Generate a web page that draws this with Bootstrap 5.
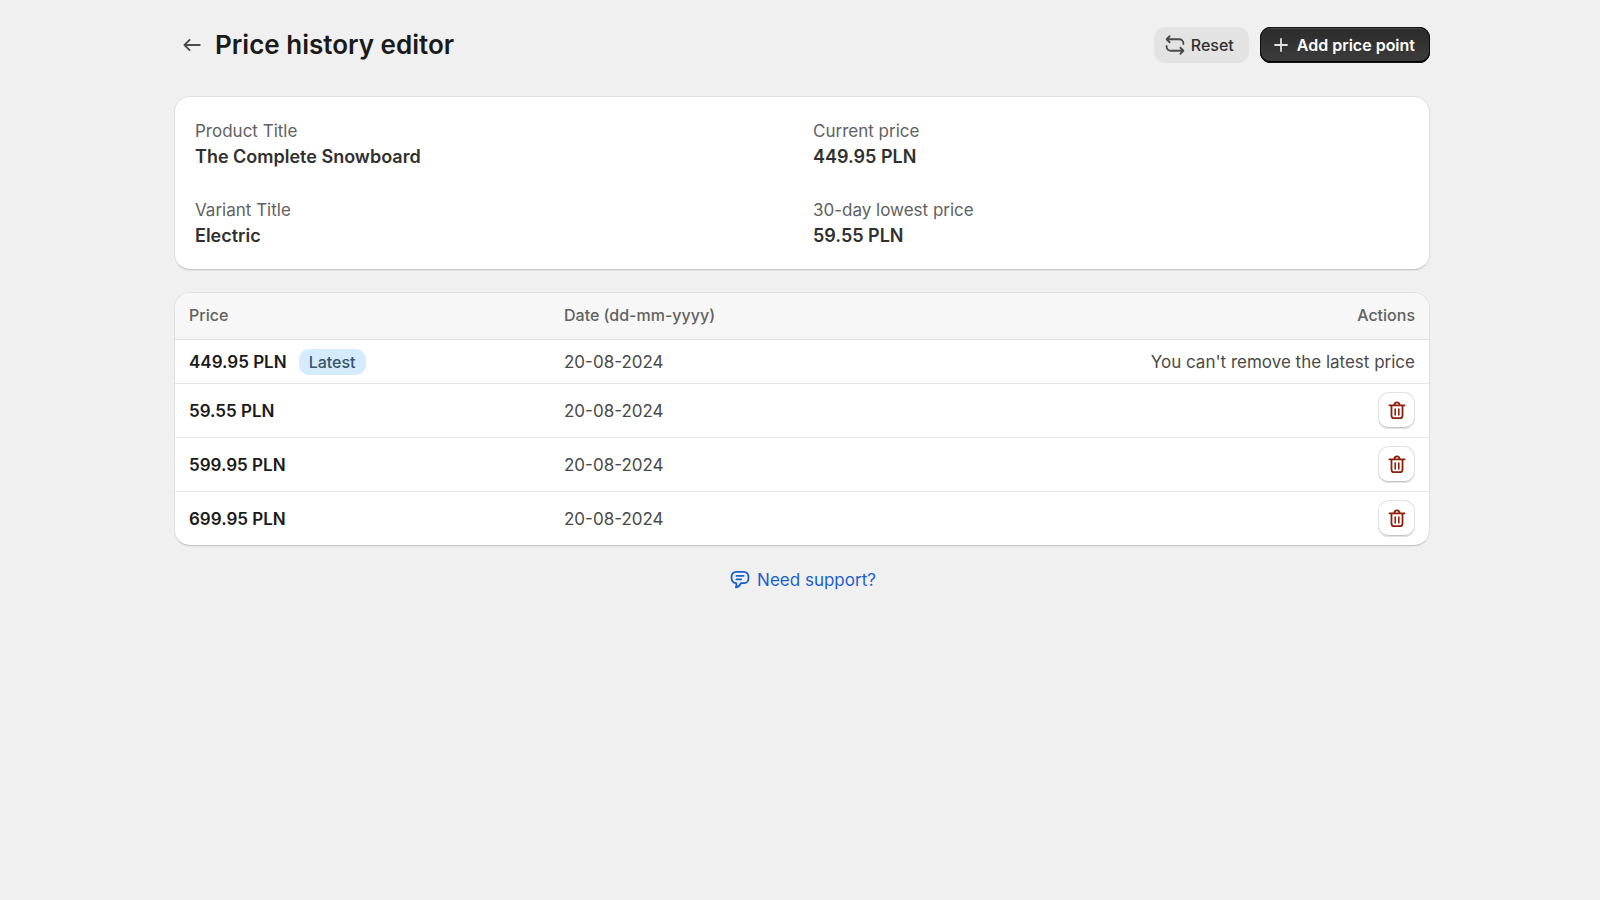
<!DOCTYPE html>
<html lang="en">
<head>
<meta charset="utf-8">
<meta name="viewport" content="width=device-width, initial-scale=1">
<title>Price history editor</title>
<link href="https://cdn.jsdelivr.net/npm/bootstrap@5.3.0/dist/css/bootstrap.min.css" rel="stylesheet">
<style>
  body { background: #f0f0f0; color: #303030; font-family: Inter, "Liberation Sans", sans-serif; font-size: 17px; line-height: 26px; }
  .page { max-width: 1256px; }
  .page-head { padding: 27px 0 33px; }
  .page-title { font-size: 26px; line-height: 32px; font-weight: 600; color: #1a1a1a; }
  .ico { width: 24px; height: 24px; fill: none; stroke: currentColor; stroke-width: 1.5; stroke-linecap: round; stroke-linejoin: round; flex: none; }
  .back { color: #4a4a4a; padding: 6px; margin-right: 5px; }
  .tools { gap: 11px; }
  .tool { --bs-btn-border-width: 0; height: 36px; padding: 0 15px 0 9px; gap: 4px; font-size: 16px; font-weight: 500; line-height: 20px; border-radius: 11px; }
  .tool-plain { --bs-btn-color: #303030; --bs-btn-bg: #e3e3e3; --bs-btn-hover-bg: #d9d9d9; --bs-btn-hover-color: #303030; }
  .tool-plain .ico { color: #4a4a4a; }
  .tool-main { --bs-btn-color: #fff; --bs-btn-hover-color: #fff; font-weight: 600; background: linear-gradient(#2b2b2b, #3d3d3d); box-shadow: inset 0 0 0 1px #111, inset 0 -2px 0 #000, inset 0 2px 0 #4a4a4a; }
  .tool-main .ico { color: #e3e3e3; }
  .panel { --bs-card-border-color: #e0e0e0; --bs-card-border-radius: 16px; border-bottom-color: #c9c9c9; overflow: hidden; box-shadow: 0 1px 0 rgba(0,0,0,.05); }
  .panel + .panel { margin-top: 22px; }
  .facts { grid-template-columns: 1fr 1fr; padding: 21px 20px 20px; gap: 27px 22px; }
  .facts dt { font-weight: 400; color: #616161; }
  .facts dd { font-size: 18px; font-weight: 600; margin: 0; }
  .prices { --bs-table-bg: transparent; --bs-table-color: #4a4a4a; margin: 0; }
  .prices > :not(caption) > * > * { padding: 8px 14px; border-bottom: 1px solid #e6e6e6; }
  .prices > thead > tr > th { padding: 9px 14px 11px; background: #f7f7f7; color: #616161; font-size: 16px; font-weight: 550; border-color: #dedede; }
  .prices tbody th { color: #1a1a1a; font-weight: 600; }
  .prices > tbody > .first-row > * { padding-top: 9px; }
  .prices > tbody > tr:last-child > * { border-bottom: 0; }
  .col-price { width: 375px; }
  .price-line { gap: 12px; }
  .tag { background: #d5ebff; color: #35566b; font-size: 16px; font-weight: 500; line-height: 26px; padding: 0 10px; border-radius: 10px; }
  .trash { --bs-btn-border-width: 0; width: 37px; height: 37px; color: #8e1f0b; background: #fff; border-radius: 11px; box-shadow: inset 0 0 0 1px #e3e3e3, inset 0 -2px 0 #c4c4c4; }
  .trash:hover { color: #8e1f0b; background: #fafafa; }
  .support-bar { padding-top: 21px; }
  .support { color: #1a5fd0; gap: 5px; }
</style>
</head>
<body>
<svg class="d-none" aria-hidden="true">
  <symbol id="trash" viewBox="0 0 20 20">
    <path d="M3.700 5.300h12.600M5.400 5.500v8.200c0 1.500.7 2.300 2.200 2.300h4.800c1.500 0 2.200-.8 2.200-2.300V5.500M7.800 5a2.200 2.200 0 0 1 4.400 0"/>
    <path d="M8.500 8.300v5M11.500 8.300v5" stroke-width="1.300"/>
  </symbol>
</svg>
<div class="ps-1">
<div class="page mx-auto">
  <header class="page-head d-flex align-items-center justify-content-between">
    <div class="d-flex align-items-center">
      <a href="#" class="back d-flex" aria-label="Back"><svg class="ico" viewBox="0 0 20 20"><path d="M16.500 10h-12.500M8 5.700L3.700 10L8 14.300"/></svg></a>
      <h1 class="page-title m-0">Price history editor</h1>
    </div>
    <div class="tools d-flex">
      <button type="button" class="btn tool tool-plain d-flex align-items-center"><svg class="ico" viewBox="0 0 20 20"><path d="M5.500 2.700L3 5.200L5.500 7.700M3.300 5.200H13.500A3.500 3.500 0 0 1 17 8.700V9.200M14.500 12.300L17 14.800L14.500 17.300M16.700 14.800H6.500A3.500 3.500 0 0 1 3 11.300V10.800"/></svg>Reset</button>
      <button type="button" class="btn tool tool-main d-flex align-items-center"><svg class="ico" viewBox="0 0 20 20"><path d="M10 5v10M5 10h10"/></svg>Add price point</button>
    </div>
  </header>

  <main>
    <section class="card panel">
      <dl class="facts d-grid m-0">
        <div><dt>Product Title</dt><dd>The Complete Snowboard</dd></div>
        <div><dt>Current price</dt><dd>449.95 PLN</dd></div>
        <div><dt>Variant Title</dt><dd>Electric</dd></div>
        <div><dt>30-day lowest price</dt><dd>59.55 PLN</dd></div>
      </dl>
    </section>

    <section class="card panel">
      <table class="table prices align-middle">
        <thead><tr><th scope="col" class="col-price">Price</th><th scope="col">Date (dd-mm-yyyy)</th><th scope="col" class="text-end">Actions</th></tr></thead>
        <tbody>
          <tr class="first-row"><th scope="row"><div class="price-line d-flex align-items-center">449.95 PLN<span class="tag">Latest</span></div></th><td>20-08-2024</td><td class="text-end">You can't remove the latest price</td></tr>
          <tr><th scope="row">59.55 PLN</th><td>20-08-2024</td><td><button type="button" class="btn trash p-0 d-flex align-items-center justify-content-center ms-auto" aria-label="Remove"><svg class="ico"><use href="#trash"/></svg></button></td></tr>
          <tr><th scope="row">599.95 PLN</th><td>20-08-2024</td><td><button type="button" class="btn trash p-0 d-flex align-items-center justify-content-center ms-auto" aria-label="Remove"><svg class="ico"><use href="#trash"/></svg></button></td></tr>
          <tr><th scope="row">699.95 PLN</th><td>20-08-2024</td><td><button type="button" class="btn trash p-0 d-flex align-items-center justify-content-center ms-auto" aria-label="Remove"><svg class="ico"><use href="#trash"/></svg></button></td></tr>
        </tbody>
      </table>
    </section>
  </main>

  <footer class="support-bar d-flex justify-content-center">
    <a href="#" class="support d-flex align-items-center text-decoration-none"><svg class="ico" viewBox="0 0 20 20"><path d="M6.700 3.200h6.600a3.700 3.700 0 0 1 3.700 3.700v2a3.700 3.700 0 0 1-3.700 3.700h-2.500c-.9 2.200-2.300 3.200-4.200 3.600.5-1.200.6-2.200.3-3.600a3.800 3.800 0 0 1-3.900-3.700V6.900A3.700 3.700 0 0 1 6.700 3.200zM7 6.600h6M7 9.400h4"/></svg>Need support?</a>
  </footer>
</div>
</div>
<script src="https://cdn.jsdelivr.net/npm/bootstrap@5.3.0/dist/js/bootstrap.bundle.min.js"></script>
</body>
</html>
